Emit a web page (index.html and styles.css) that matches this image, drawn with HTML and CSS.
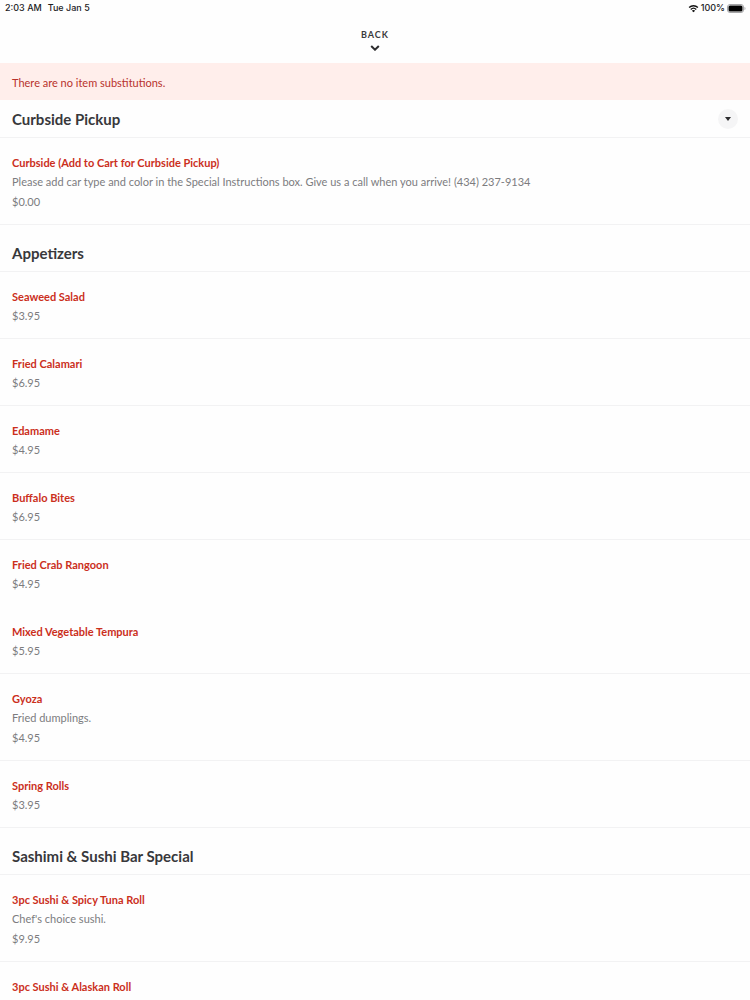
FILE: index.html
```html
<!DOCTYPE html>
<html lang="en">
	<head>
		<meta charset="UTF-8" />
		<meta name="viewport" content="width=device-width, initial-scale=1.0" />
		<title>Menu</title>
		<link rel="stylesheet" href="styles.css">
	</head>
	<body>
		<div class="status-bar">
			<div class="status-left">
				<span>2:03 AM</span>
				<span>Tue Jan 5</span>
			</div>
			<div class="status-right">
				<svg class="wifi" viewBox="0 0 20 16" aria-hidden="true">
					<path d="M2 6.2C6.6 1.8 13.4 1.8 18 6.2" />
					<path d="M5 9.6c2.9-2.7 7.1-2.7 10 0" />
					<path class="wifi-dot" d="M10 15l-3-3c1.700-1.500 4.300-1.500 6 0z" />
				</svg>
				<span>100%</span>
				<svg class="battery" viewBox="0 0 19 9" aria-hidden="true">
					<rect class="battery-case" x="0.5" y="0.5" width="16" height="8" rx="2.500" />
					<rect x="1.500" y="1.500" width="14" height="6" rx="1.500" />
					<path class="battery-tip" d="M17.500 3c1.300.4 1.300 2.600 0 3z" />
				</svg>
			</div>
		</div>
		<header class="header">
			<button class="back" type="button">
				<span>BACK</span>
				<svg viewBox="0 0 10 6" aria-hidden="true">
					<path d="M1.200 1L5 4.700 8.800 1" />
				</svg>
			</button>
		</header>
		<main>
			<p class="notice">There are no item substitutions.</p>

			<section>
				<div class="section-header pinned">
					<h2>Curbside Pickup</h2>
					<button class="toggle" type="button" aria-label="Choose a section">
						<svg viewBox="0 0 6 4" aria-hidden="true">
							<path d="M0 0h6L3 4z" />
						</svg>
					</button>
				</div>
				<ul class="items">
					<li class="item">
						<h3><a href="#">Curbside (Add to Cart for Curbside Pickup)</a></h3>
						<p class="description">Please add car type and color in the Special Instructions box. Give us a call when you arrive! (434) 237-9134</p>
						<p>$0.00</p>
					</li>
				</ul>
			</section>

			<section>
				<div class="section-header">
					<h2>Appetizers</h2>
				</div>
				<ul class="items">
					<li class="item">
						<h3><a href="#">Seaweed Salad</a></h3>
						<p>$3.95</p>
					</li>
					<li class="item">
						<h3><a href="#">Fried Calamari</a></h3>
						<p>$6.95</p>
					</li>
					<li class="item">
						<h3><a href="#">Edamame</a></h3>
						<p>$4.95</p>
					</li>
					<li class="item">
						<h3><a href="#">Buffalo Bites</a></h3>
						<p>$6.95</p>
					</li>
					<li class="item no-line">
						<h3><a href="#">Fried Crab Rangoon</a></h3>
						<p>$4.95</p>
					</li>
					<li class="item">
						<h3><a href="#">Mixed Vegetable Tempura</a></h3>
						<p>$5.95</p>
					</li>
					<li class="item">
						<h3><a href="#">Gyoza</a></h3>
						<p class="description">Fried dumplings.</p>
						<p>$4.95</p>
					</li>
					<li class="item">
						<h3><a href="#">Spring Rolls</a></h3>
						<p>$3.95</p>
					</li>
				</ul>
			</section>

			<section>
				<div class="section-header">
					<h2>Sashimi &amp; Sushi Bar Special</h2>
				</div>
				<ul class="items">
					<li class="item">
						<h3><a href="#">3pc Sushi &amp; Spicy Tuna Roll</a></h3>
						<p class="description">Chef's choice sushi.</p>
						<p>$9.95</p>
					</li>
					<li class="item no-line">
						<h3><a href="#">3pc Sushi &amp; Alaskan Roll</a></h3>
					</li>
				</ul>
			</section>
		</main>
	</body>
</html>
```
FILE: styles.css
```css
* {
	margin: 0;
	padding: 0;
	box-sizing: border-box;
}

body {
	font-family: Lato, "Open Sans", sans-serif;
	font-size: 11px;
	line-height: 19px;
	color: #7c7c7e;
	background-color: #fefefe;
}

.status-bar {
	display: flex;
	justify-content: space-between;
	padding: 0 4px 0 5px;
	font-family: Inter, Roboto, sans-serif;
	font-size: 9px;
	font-weight: 500;
	line-height: 16px;
	color: #1c1c1e;
}

.status-left {
	display: flex;
	gap: 6px;
}

.status-right {
	display: flex;
	align-items: center;
	gap: 2px;
}

.wifi {
	width: 11px;
	height: 9px;
	fill: none;
	stroke: #111;
	stroke-width: 2.5;
}

.wifi .wifi-dot {
	fill: #111;
	stroke: none;
}

.battery {
	width: 19px;
	height: 9px;
	fill: #000;
}

.battery .battery-case {
	fill: none;
	stroke: #a5a5a7;
}

.battery .battery-tip {
	fill: #a5a5a7;
}

.header {
	display: flex;
	justify-content: center;
	padding: 12px 0 9px;
}

.back {
	display: flex;
	flex-direction: column;
	align-items: center;
	height: 26px;
	border: none;
	background: none;
	font-family: inherit;
	font-size: 9px;
	font-weight: 700;
	line-height: 13px;
	letter-spacing: 1px;
	color: #3a3a3c;
	cursor: pointer;
}

.back svg {
	width: 10px;
	height: 6px;
	margin-top: 4px;
	fill: none;
	stroke: #2c2c2e;
	stroke-width: 2;
}

.notice {
	padding: 10px 12px 8px;
	background-color: #ffeeeb;
	color: #b8322c;
}

.section-header {
	display: flex;
	align-items: center;
	justify-content: space-between;
	padding: 18px 12px 8px;
	border-bottom: 1px solid #f2f2f3;
}

.section-header.pinned {
	padding-top: 9px;
}

h2 {
	font-size: 15px;
	font-weight: 700;
	line-height: 20px;
	color: #38383b;
}

.toggle {
	display: flex;
	align-items: center;
	justify-content: center;
	width: 20px;
	height: 20px;
	border: none;
	border-radius: 50%;
	background-color: #f5f5f6;
	cursor: pointer;
}

.toggle svg {
	width: 6px;
	height: 4px;
	fill: #2c2c2e;
}

.items {
	list-style: none;
}

.item {
	padding: 15px 12px 13px;
	border-bottom: 1px solid #f2f2f3;
}

.item.no-line {
	border-bottom-color: transparent;
}

.item h3 {
	font-size: 11px;
	font-weight: 700;
}

.item a {
	color: #cb2f1c;
	text-decoration: none;
}

.description {
	margin-bottom: 1px;
}
```
